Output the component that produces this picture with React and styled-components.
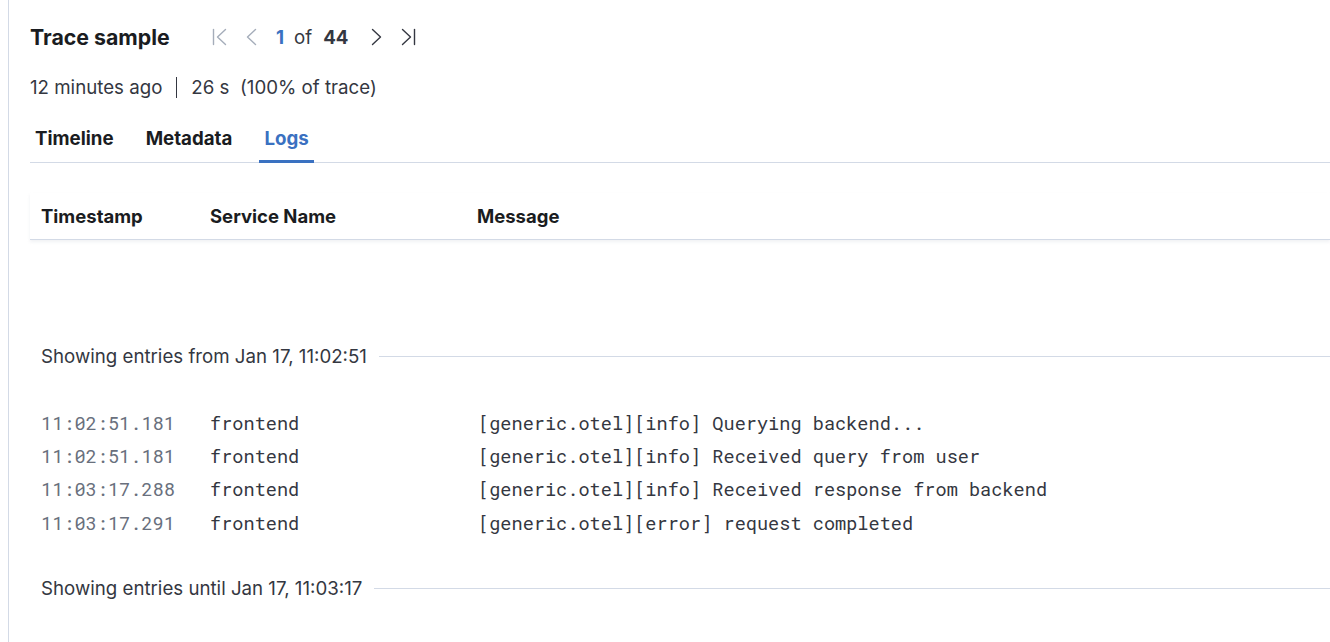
import React from 'react';
import styled, { createGlobalStyle } from 'styled-components';

const GlobalStyle = createGlobalStyle`
  html, body {
    margin: 0;
    padding: 0;
    background: #fff;
  }
  body {
    font-family: Inter, "Noto Sans", sans-serif;
    color: #343741;
    overflow: hidden;
  }
`;

const Flyout = styled.div`
  margin-left: 8px;
  border-left: 1px solid #d3dae6;
  padding: 20px 0 0 21px;
  min-height: 642px;
  box-sizing: border-box;
`;

const Header = styled.div`
  display: flex;
  align-items: center;
  height: 34px;
`;

const Title = styled.h2`
  margin: 0;
  font-size: 21.3px;
  font-weight: 700;
  color: #1a1c21;
  width: 173px;
`;

const Pager = styled.div`
  display: flex;
  align-items: center;
  font-size: 18.7px;
`;

const PagerButton = styled.button`
  border: 0;
  background: none;
  padding: 0;
  width: 32px;
  height: 32px;
  display: flex;
  align-items: center;
  justify-content: center;
  color: ${p => (p.disabled ? '#a5adba' : '#343741')};
  cursor: ${p => (p.disabled ? 'default' : 'pointer')};
`;

const PageCurrent = styled.span`
  color: #3a71c1;
  font-weight: 700;
  margin-left: 9px;
`;

const PageOf = styled.span`
  margin: 0 11px 0 10px;
`;

const PageTotal = styled.span`
  font-weight: 700;
  margin-right: 12px;
`;

const Meta = styled.div`
  display: flex;
  align-items: center;
  margin-top: 21px;
  height: 24px;
  font-size: 18.7px;
  color: #343741;
`;

const Divider = styled.span`
  width: 1px;
  height: 21px;
  background: #343741;
  margin: 0 14px;
`;

const Tabs = styled.div`
  display: flex;
  gap: 22px;
  margin-top: 14px;
  border-bottom: 1px solid #d3dae6;
`;

const Tab = styled.button`
  border: 0;
  background: none;
  font-family: inherit;
  font-size: 18.7px;
  font-weight: 700;
  padding: 0 5px;
  height: 50px;
  margin-bottom: -1px;
  color: ${p => (p.active ? '#3a71c1' : '#1a1c21')};
  box-shadow: ${p => (p.active ? 'inset 0 -3px 0 #3a71c1' : 'none')};
  cursor: pointer;
`;

const Table = styled.div`
  margin-top: 30px;
`;

const HeadRow = styled.div`
  display: grid;
  grid-template-columns: 169px 267px 1fr;
  padding-left: 11px;
  height: 46px;
  align-items: center;
  border-bottom: 1px solid #d3dae6;
  box-shadow: 0 2px 3px rgba(152, 162, 179, 0.15);
  font-size: 18.5px;
  font-weight: 700;
  color: #1a1c21;
`;

const Marker = styled.div`
  display: flex;
  align-items: center;
  gap: 12px;
  height: 24px;
  padding-left: 11px;
  font-size: 18.7px;
  color: #343741;
  margin-top: ${p => p.top}px;
  &::after {
    content: '';
    flex: 1;
    height: 1px;
    background: #d3dae6;
  }
`;

const Rows = styled.div`
  margin-top: 38px;
  margin-bottom: 37px;
`;

const Row = styled.div`
  display: grid;
  grid-template-columns: 169px 268px 1fr;
  padding-left: 11px;
  height: 33.4px;
  align-items: center;
  font-family: "Roboto Mono", "DejaVu Sans Mono", monospace;
  font-size: 18.6px;
  color: #343741;
`;

const Time = styled.span`
  color: #69707d;
`;

const Chevron = ({ dir, bar }) => (
  <svg width={bar ? 15 : 11} height="18" viewBox={bar ? '0 0 15 18' : '0 0 11 18'} fill="none" stroke="currentColor" strokeWidth="1.4" strokeLinecap="round" strokeLinejoin="round">
    {dir === 'left' && bar && (
      <>
        <line x1="1.5" y1="1.5" x2="1.5" y2="16.5" />
        <polyline points="13.5,1.5 5.5,9 13.5,16.5" />
      </>
    )}
    {dir === 'left' && !bar && <polyline points="9.5,1.5 1.5,9 9.5,16.5" />}
    {dir === 'right' && !bar && <polyline points="1.5,1.5 9.5,9 1.5,16.5" />}
    {dir === 'right' && bar && (
      <>
        <polyline points="1.5,1.5 9.5,9 1.5,16.5" />
        <line x1="13.5" y1="1.5" x2="13.5" y2="16.5" />
      </>
    )}
  </svg>
);

const logs = [
  { time: '11:02:51.181', service: 'frontend', message: '[generic.otel][info] Querying backend...' },
  { time: '11:02:51.181', service: 'frontend', message: '[generic.otel][info] Received query from user' },
  { time: '11:03:17.288', service: 'frontend', message: '[generic.otel][info] Received response from backend' },
  { time: '11:03:17.291', service: 'frontend', message: '[generic.otel][error] request completed' },
];

export default function App() {
  return (
    <>
      <GlobalStyle />
      <Flyout>
        <Header>
          <Title>Trace sample</Title>
          <Pager>
            <PagerButton disabled aria-label="First page"><Chevron dir="left" bar /></PagerButton>
            <PagerButton disabled aria-label="Previous page"><Chevron dir="left" /></PagerButton>
            <PageCurrent>1</PageCurrent>
            <PageOf>of</PageOf>
            <PageTotal>44</PageTotal>
            <PagerButton aria-label="Next page"><Chevron dir="right" /></PagerButton>
            <PagerButton aria-label="Last page"><Chevron dir="right" bar /></PagerButton>
          </Pager>
        </Header>
        <Meta>
          12 minutes ago
          <Divider />
          26 s&nbsp;&nbsp;(100% of trace)
        </Meta>
        <Tabs>
          <Tab>Timeline</Tab>
          <Tab>Metadata</Tab>
          <Tab active>Logs</Tab>
        </Tabs>
        <Table>
          <HeadRow>
            <span>Timestamp</span>
            <span>Service Name</span>
            <span>Message</span>
          </HeadRow>
          <Marker top={104}>Showing entries from Jan 17, 11:02:51</Marker>
          <Rows>
            {logs.map((l, i) => (
              <Row key={i}>
                <Time>{l.time}</Time>
                <span>{l.service}</span>
                <span>{l.message}</span>
              </Row>
            ))}
          </Rows>
          <Marker top={0}>Showing entries until Jan 17, 11:03:17</Marker>
        </Table>
      </Flyout>
    </>
  );
}
